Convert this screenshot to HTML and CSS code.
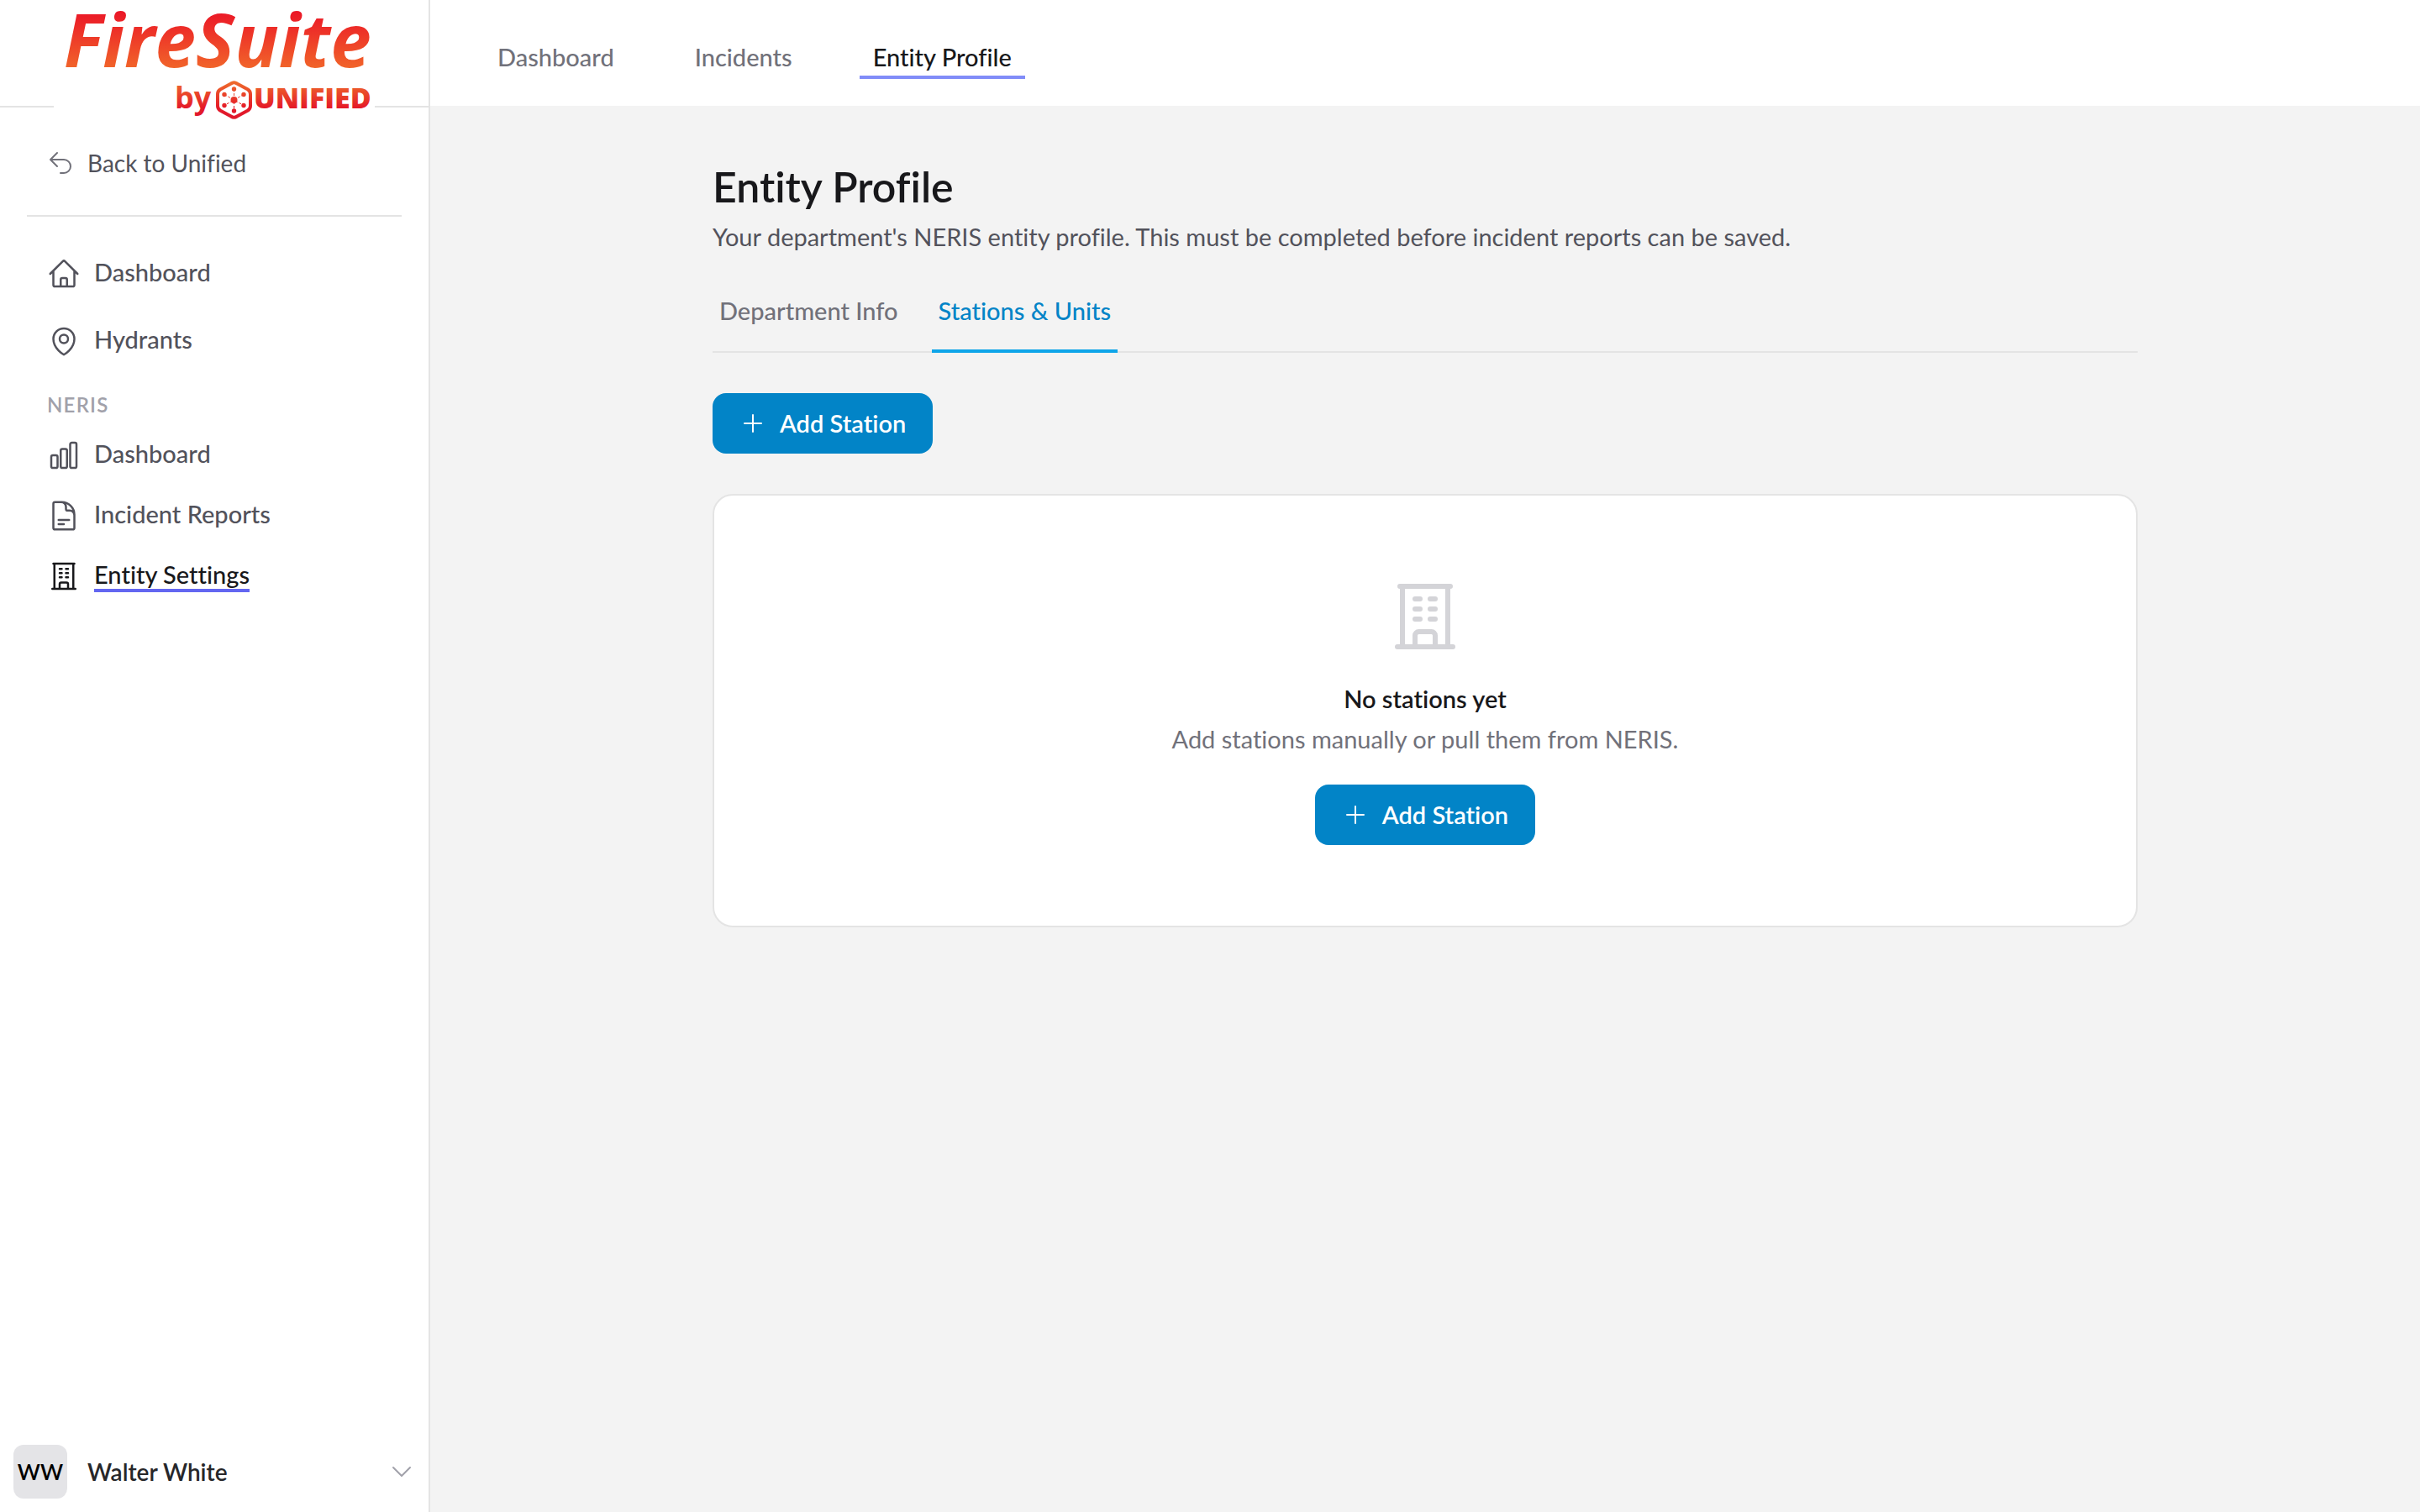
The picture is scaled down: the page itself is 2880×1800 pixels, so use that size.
FILE: index.html
```html
<!DOCTYPE html>
<html lang="en">
<head>
<meta charset="utf-8">
<meta name="viewport" content="width=device-width, initial-scale=1">
<title>Entity Profile – FireSuite</title>
<link rel="stylesheet" href="styles.css">
</head>
<body>
<div class="app">
  <aside class="sidebar">
    <div class="brand">
      <svg class="logo" viewBox="0 0 382 158" role="img" aria-label="FireSuite by Unified">
        <defs>
          <linearGradient id="flame" gradientUnits="userSpaceOnUse" x1="0" y1="14" x2="0" y2="80">
            <stop offset="0" stop-color="#eb1727"/><stop offset="1" stop-color="#f1632a"/>
          </linearGradient>
          <linearGradient id="ember" gradientUnits="userSpaceOnUse" x1="0" y1="98" x2="0" y2="138">
            <stop offset="0" stop-color="#ee6a2c"/><stop offset="0.75" stop-color="#e51a28"/><stop offset="1" stop-color="#e0182c"/>
          </linearGradient>
        </defs>
        <text class="logo-name" x="12" y="80" fill="url(#flame)">FireSuite</text>
        <text class="logo-by" x="144" y="129" fill="url(#ember)">by</text>
        <g stroke="url(#ember)" fill="none">
          <path stroke-width="4" stroke-linejoin="round" d="M211 99.500Q214.500 97 218 99.500L231 106.500Q234 108.500 234 112V126Q234 129.500 231 131.500L218 138.500Q214.500 141 211 138.500L198 131.500Q195 129.500 195 126V112Q195 108.500 198 106.500Z"/>
          <path stroke-width="1" stroke-dasharray="3 2" d="M214.600 106L214.500 132M203 112.500L226 125.500M226 112.500L203 125.500"/>
        </g>
        <g fill="url(#ember)">
          <circle cx="214.500" cy="119" r="4"/>
          <circle cx="214.500" cy="106" r="2.700"/><circle cx="226" cy="112.500" r="2.700"/><circle cx="226" cy="125.500" r="2.700"/>
          <circle cx="214.500" cy="132" r="2.700"/><circle cx="203" cy="125.500" r="2.700"/><circle cx="203" cy="112.500" r="2.700"/>
        </g>
        <text class="logo-unified" x="238" y="129" fill="url(#ember)">UNIFIED</text>
      </svg>
    </div>

    <a class="back" href="#">
      <svg class="icon icon-sm" viewBox="0 0 24 24"><path d="M9 15 3 9m0 0 6-6M3 9h12a6 6 0 0 1 0 12h-3"/></svg>
      <span>Back to Unified</span>
    </a>

    <nav class="side-nav" aria-label="Main">
      <div class="group group-main">
        <a class="side-link" href="#">
          <svg class="icon" viewBox="0 0 24 24"><path d="m2.250 12 8.954-8.955c.44-.439 1.152-.439 1.591 0L21.750 12M4.500 9.750v10.125c0 .621.504 1.125 1.125 1.125H9.750v-4.875c0-.621.504-1.125 1.125-1.125h2.250c.621 0 1.125.504 1.125 1.125V21h4.125c.621 0 1.125-.504 1.125-1.125V9.750M8.250 21h8.250"/></svg>
          <span class="side-text">Dashboard</span>
        </a>
        <a class="side-link" href="#">
          <svg class="icon" viewBox="0 0 24 24"><path d="M15 10.500a3 3 0 1 1-6 0 3 3 0 0 1 6 0Z"/><path d="M19.500 10.500c0 7.142-7.500 11.250-7.500 11.250S4.500 17.642 4.500 10.500a7.500 7.500 0 1 1 15 0Z"/></svg>
          <span class="side-text">Hydrants</span>
        </a>
      </div>
      <h2 class="group-title">NERIS</h2>
      <div class="group">
        <a class="side-link" href="#">
          <svg class="icon" viewBox="0 0 24 24"><path d="M3 13.125C3 12.504 3.504 12 4.125 12h2.250c.621 0 1.125.504 1.125 1.125v6.750C7.500 20.496 6.996 21 6.375 21h-2.250A1.125 1.125 0 0 1 3 19.875v-6.750ZM9.750 8.625c0-.621.504-1.125 1.125-1.125h2.250c.621 0 1.125.504 1.125 1.125v11.250c0 .621-.504 1.125-1.125 1.125h-2.250a1.125 1.125 0 0 1-1.125-1.125V8.625ZM16.500 4.125c0-.621.504-1.125 1.125-1.125h2.250C20.496 3 21 3.504 21 4.125v15.750c0 .621-.504 1.125-1.125 1.125h-2.250a1.125 1.125 0 0 1-1.125-1.125V4.125Z"/></svg>
          <span class="side-text">Dashboard</span>
        </a>
        <a class="side-link" href="#">
          <svg class="icon" viewBox="0 0 24 24"><path d="M19.500 14.250v-2.625a3.375 3.375 0 0 0-3.375-3.375h-1.500A1.125 1.125 0 0 1 13.500 7.125v-1.500a3.375 3.375 0 0 0-3.375-3.375H8.250m0 12.750h7.500m-7.500 3H12M10.500 2.250H5.625c-.621 0-1.125.504-1.125 1.125v17.250c0 .621.504 1.125 1.125 1.125h12.750c.621 0 1.125-.504 1.125-1.125V11.250a9 9 0 0 0-9-9Z"/></svg>
          <span class="side-text">Incident Reports</span>
        </a>
        <a class="side-link is-active" href="#" aria-current="page">
          <svg class="icon" viewBox="0 0 24 24"><path d="M3.750 21h16.500M4.500 3h15M5.250 3v18m13.500-18v18M9 6.750h1.500m-1.500 3h1.500m-1.500 3h1.500m3-6H15m-1.500 3H15m-1.500 3H15M9 21v-3.375c0-.621.504-1.125 1.125-1.125h3.750c.621 0 1.125.504 1.125 1.125V21"/></svg>
          <span class="side-text">Entity Settings</span>
        </a>
      </div>
    </nav>

    <button class="user" type="button">
      <span class="avatar">WW</span>
      <span class="user-name">Walter White</span>
      <svg class="icon icon-sm" viewBox="0 0 24 24"><path d="m19.500 8.250-7.500 7.500-7.500-7.500"/></svg>
    </button>
  </aside>

  <div class="page">
    <nav class="topbar" aria-label="NERIS">
      <a class="top-link" href="#">Dashboard</a>
      <a class="top-link" href="#">Incidents</a>
      <a class="top-link is-active" href="#" aria-current="page">Entity Profile</a>
    </nav>

    <main class="content">
      <h1 class="title">Entity Profile</h1>
      <p class="subtitle">Your department's NERIS entity profile. This must be completed before incident reports can be saved.</p>

      <div class="tabs" role="tablist">
        <button class="tab" type="button" role="tab" aria-selected="false">Department Info</button>
        <button class="tab is-active" type="button" role="tab" aria-selected="true">Stations &amp; Units</button>
      </div>

      <button class="btn" type="button">
        <svg class="icon icon-sm" viewBox="0 0 24 24"><path d="M12 4.500v15m7.500-7.500h-15"/></svg>
        Add Station
      </button>

      <section class="card">
        <svg class="icon icon-lg" viewBox="0 0 24 24"><path d="M3.750 21h16.500M4.500 3h15M5.250 3v18m13.500-18v18M9 6.750h1.500m-1.500 3h1.500m-1.500 3h1.500m3-6H15m-1.500 3H15m-1.500 3H15M9 21v-3.375c0-.621.504-1.125 1.125-1.125h3.750c.621 0 1.125.504 1.125 1.125V21"/></svg>
        <h2 class="empty-title">No stations yet</h2>
        <p class="empty-text">Add stations manually or pull them from NERIS.</p>
        <button class="btn" type="button">
          <svg class="icon icon-sm" viewBox="0 0 24 24"><path d="M12 4.500v15m7.500-7.500h-15"/></svg>
          Add Station
        </button>
      </section>
    </main>
  </div>
</div>
</body>
</html>
```
FILE: styles.css
```css
*, *::before, *::after { box-sizing: border-box; }

body {
  margin: 0;
  background: #f3f3f3;
  color: #18181b;
  font-family: Lato, "Open Sans", sans-serif;
  font-size: 29px;
  line-height: 40px;
  font-variant-ligatures: none;
}

h1, h2, p { margin: 0; }
a { color: inherit; text-decoration: none; }
button { border: 0; margin: 0; background: none; font: inherit; color: inherit; cursor: pointer; font-variant-ligatures: none; }

.app { display: flex; min-height: 100vh; }

.icon {
  flex: none;
  width: 40px;
  height: 40px;
  fill: none;
  stroke: currentColor;
  stroke-width: 1.5;
  stroke-linecap: round;
  stroke-linejoin: round;
}
.icon-sm { width: 32px; height: 32px; }
.icon-lg { width: 96px; height: 96px; color: #d4d4d8; }

/* Sidebar */
.sidebar {
  display: flex;
  flex: none;
  flex-direction: column;
  width: 512px;
  background: #fff;
  border-right: 2px solid #e4e4e4;
}
.brand {
  display: flex;
  align-items: flex-start;
  height: 128px;
  padding-left: 64px;
  border-bottom: 2px solid #e4e4e4;
}
.logo { flex: none; width: 382px; height: 158px; background: #fff; }
.logo-name { font: italic 700 87px "Open Sans", sans-serif; }
.logo-by { font: 700 36px "Open Sans", sans-serif; }
.logo-unified { font: 800 34px "Open Sans", sans-serif; }

.back {
  display: flex;
  align-items: center;
  gap: 16px;
  margin: 0 32px;
  padding: 46px 24px 42px;
  border-bottom: 2px solid #e4e4e4;
  color: #52525b;
  font-size: 28px;
}
.back .icon { color: #71717a; }

.side-nav { padding: 32px 32px 0; }
.group { display: flex; flex-direction: column; }
.group-main { gap: 8px; }
.group-title {
  padding: 20px 24px 4px;
  color: #a1a1aa;
  font-size: 24px;
  font-weight: 600;
  letter-spacing: 0.05em;
}
.side-link {
  display: flex;
  align-items: center;
  gap: 16px;
  padding: 16px 24px;
  color: #52525b;
  font-weight: 500;
}
.side-text { line-height: 34px; border-bottom: 4px solid transparent; }
.side-link.is-active { color: #18181b; }
.side-link.is-active .side-text { border-bottom-color: #6366f1; }

.user {
  display: flex;
  align-items: center;
  margin-top: auto;
  padding: 16px;
  font-size: 28px;
  text-align: left;
}
.avatar {
  width: 64px;
  border-radius: 12px;
  background: #e4e4e7;
  color: #000;
  font-size: 26px;
  font-weight: 600;
  line-height: 64px;
  text-align: center;
}
.user-name { flex: 1; margin-left: 24px; color: #27272a; font-weight: 600; }
.user .icon { color: #a1a1aa; }

/* Page */
.page { flex: 1; min-width: 0; }
.topbar {
  display: flex;
  gap: 64px;
  padding: 32px 64px;
  background: #fff;
}
.top-link {
  padding: 16px 16px 2px;
  border-bottom: 4px solid transparent;
  color: #71717a;
  font-weight: 500;
}
.top-link.is-active { color: #18181b; border-bottom-color: #818cf8; }

.content { max-width: 1824px; margin: 0 auto; padding: 64px; }
.title { font-size: 50px; font-weight: 600; line-height: 64px; }
.subtitle { margin-top: 8px; color: #52525b; }

.tabs {
  display: flex;
  gap: 32px;
  margin: 32px 0 48px;
  border-bottom: 2px solid #e4e4e4;
}
.tab {
  margin-bottom: -2px;
  padding: 16px 8px 26px;
  border-bottom: 4px solid transparent;
  color: #71717a;
  font-weight: 500;
}
.tab.is-active { color: #0284c7; border-bottom-color: #0ea5e9; }

.btn {
  display: inline-flex;
  align-items: center;
  gap: 16px;
  padding: 16px 32px;
  border-radius: 16px;
  background: #0284c7;
  color: #fff;
  font-weight: 600;
}

.card {
  display: flex;
  flex-direction: column;
  align-items: center;
  margin-top: 48px;
  padding: 96px 32px;
  border: 2px solid #e4e4e4;
  border-radius: 24px;
  background: #fff;
}
.empty-title { margin-top: 30px; font-size: 29px; font-weight: 600; }
.empty-text { margin: 8px 0 34px; color: #71717a; }
```
